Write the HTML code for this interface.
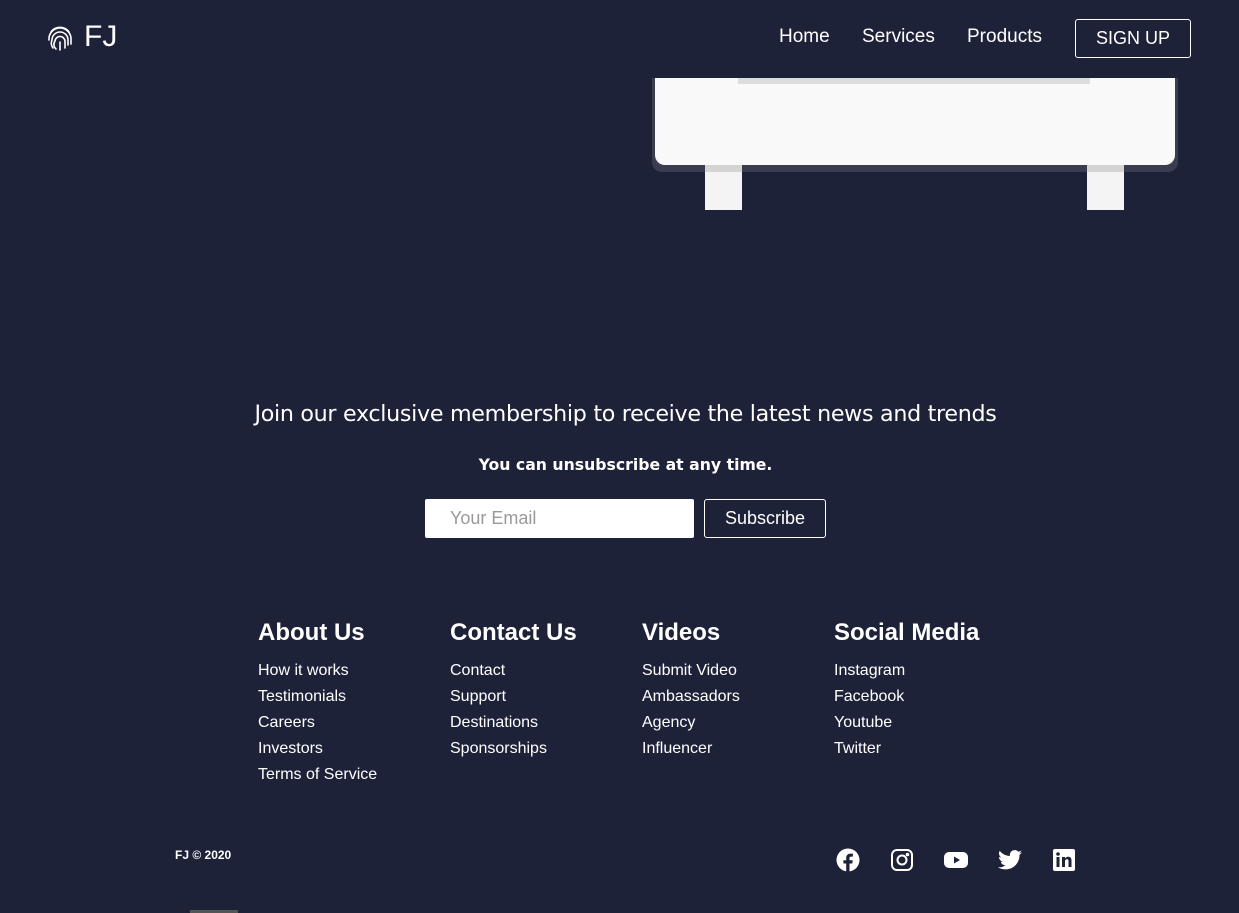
<!DOCTYPE html>
<html><head><meta charset="utf-8"><style>
body{margin:0;width:1239px;height:913px;background:#1d2239;color:#fff;font-family:"Liberation Sans",sans-serif;position:relative;overflow:hidden}
.a{position:absolute}
.nav a{position:absolute;top:26px;font-size:19px;color:#fff;text-decoration:none}
.col{position:absolute;top:619px}
.col h3{margin:0 0 11px;font-size:24px;font-weight:bold}
.col div{font-size:16px;line-height:26px}
</style></head><body>
<svg class="a" style="left:47px;top:24px" width="26" height="28" viewBox="0 0 26 28" fill="none" stroke="#fff" stroke-width="1.6" stroke-linecap="round">
<path d="M4 8a11 11 0 0 1 18 0"/><path d="M2 16a11 11 0 0 1 22-2v6"/><path d="M6 24a8 8 0 0 1-1-8a8 8 0 0 1 16 0v5"/><path d="M9 25a6 6 0 0 1-1-8a5 5 0 0 1 10 1v6"/><path d="M13 26v-8"/></svg>
<div class="a" style="left:84px;top:20px;font-size:30px">FJ</div>
<div class="nav"><a style="left:779px">Home</a><a style="left:862px">Services</a><a style="left:967px">Products</a></div>
<div class="a" style="left:1075px;top:19px;width:114px;height:37px;border:1px solid #fff;border-radius:3px;font-size:18px;text-align:center;line-height:37px">SIGN UP</div>
<div class="a" style="left:652px;top:78px;width:526px;height:94px;background:#3a3d50;border-radius:0 0 10px 10px"></div>
<div class="a" style="left:705px;top:165px;width:37px;height:45px;background:#f4f4f4"></div>
<div class="a" style="left:1087px;top:165px;width:37px;height:45px;background:#f4f4f4"></div>
<div class="a" style="left:705px;top:165px;width:37px;height:7px;background:#d4d4d4"></div>
<div class="a" style="left:1087px;top:165px;width:37px;height:7px;background:#d4d4d4"></div>
<div class="a" style="left:655px;top:78px;width:520px;height:87px;background:#f9f9f9;border-radius:0 0 10px 10px"></div>
<div class="a" style="left:738px;top:78px;width:352px;height:6px;background:#ddd"></div>
<div class="a" style="left:0;width:1239px;top:401px;text-align:center;font-size:22.2px;font-family:'DejaVu Sans',sans-serif;letter-spacing:-0.3px;padding-left:12px;box-sizing:border-box">Join our exclusive membership to receive the latest news and trends</div>
<div class="a" style="left:0;width:1239px;top:455px;text-align:center;font-size:15.7px;font-weight:bold;font-family:'DejaVu Sans',sans-serif;padding-left:12px;box-sizing:border-box">You can unsubscribe at any time.</div>
<div class="a" style="left:425px;top:499px;width:269px;height:39px;background:#fff;border-radius:2px"></div>
<div class="a" style="left:450px;top:508px;font-size:18px;color:#999">Your Email</div>
<div class="a" style="left:704px;top:499px;width:120px;height:37px;border:1px solid #fff;border-radius:3px;text-align:center;line-height:37px;font-size:18px">Subscribe</div>
<div class="col" style="left:258px"><h3>About Us</h3><div>How it works</div><div>Testimonials</div><div>Careers</div><div>Investors</div><div>Terms of Service</div></div>
<div class="col" style="left:450px"><h3>Contact Us</h3><div>Contact</div><div>Support</div><div>Destinations</div><div>Sponsorships</div></div>
<div class="col" style="left:642px"><h3>Videos</h3><div>Submit Video</div><div>Ambassadors</div><div>Agency</div><div>Influencer</div></div>
<div class="col" style="left:834px"><h3>Social Media</h3><div>Instagram</div><div>Facebook</div><div>Youtube</div><div>Twitter</div></div>
<div class="a" style="left:175px;top:848px;font-size:12px;font-weight:bold">FJ © 2020</div>
<svg class="a" style="left:836px;top:848px" width="24" height="24" viewBox="0 0 24 24"><circle cx="12" cy="12" r="11.5" fill="#fff"/><path d="M13.5 24v-8.5h2.8l.4-3.3h-3.2v-2c0-1 .3-1.6 1.7-1.6h1.7V5.7c-.3 0-1.3-.1-2.5-.1-2.5 0-4.2 1.5-4.2 4.3v2.3H7.4v3.3h2.8V24z" fill="#1d2239"/></svg>
<svg class="a" style="left:891px;top:849px" width="22" height="22" viewBox="0 0 22 22" fill="none" stroke="#fff" stroke-width="2"><rect x="1" y="1" width="20" height="20" rx="5"/><circle cx="11" cy="11" r="4.5"/><circle cx="16.5" cy="5.5" r=".8" fill="#fff"/></svg>
<svg class="a" style="left:944px;top:851px" width="24" height="18" viewBox="0 0 24 18"><rect x="0" y="1" width="24" height="16" rx="5" fill="#fff"/><path d="M10 5.5v7l6-3.5z" fill="#1d2239"/></svg>
<svg class="a" style="left:998px;top:850px" width="24" height="20" viewBox="0 0 24 20"><path fill="#fff" d="M24 2.4a9.800 9.800 0 0 1-2.8.8 4.900 4.900 0 0 0 2.200-2.700 9.900 9.900 0 0 1-3.100 1.200A4.900 4.900 0 0 0 11.900 6.100 14 14 0 0 1 1.700.9a4.900 4.900 0 0 0 1.500 6.600 4.900 4.900 0 0 1-2.200-.6c0 2.400 1.700 4.400 3.900 4.800a4.900 4.900 0 0 1-2.200.1 4.900 4.900 0 0 0 4.600 3.400A9.900 9.900 0 0 1 0 17.200 14 14 0 0 0 7.500 19.400c9.100 0 14-7.500 14-14v-.6A10 10 0 0 0 24 2.400z"/></svg>
<svg class="a" style="left:1053px;top:849px" width="22" height="22" viewBox="0 0 22 22"><rect width="22" height="22" rx="2" fill="#fff"/><rect x="3.5" y="8" width="3" height="10" fill="#1d2239"/><circle cx="5" cy="5" r="1.8" fill="#1d2239"/><path d="M9 8h3v1.500c.6-1 1.700-1.800 3.300-1.800 2.600 0 3.200 1.700 3.200 4V18h-3v-5.500c0-1.200-.2-2.200-1.500-2.200S12 11.300 12 12.500V18H9z" fill="#1d2239"/></svg>
<div class="a" style="left:190px;top:910px;width:48px;height:3px;background:#555"></div>
</body></html>
